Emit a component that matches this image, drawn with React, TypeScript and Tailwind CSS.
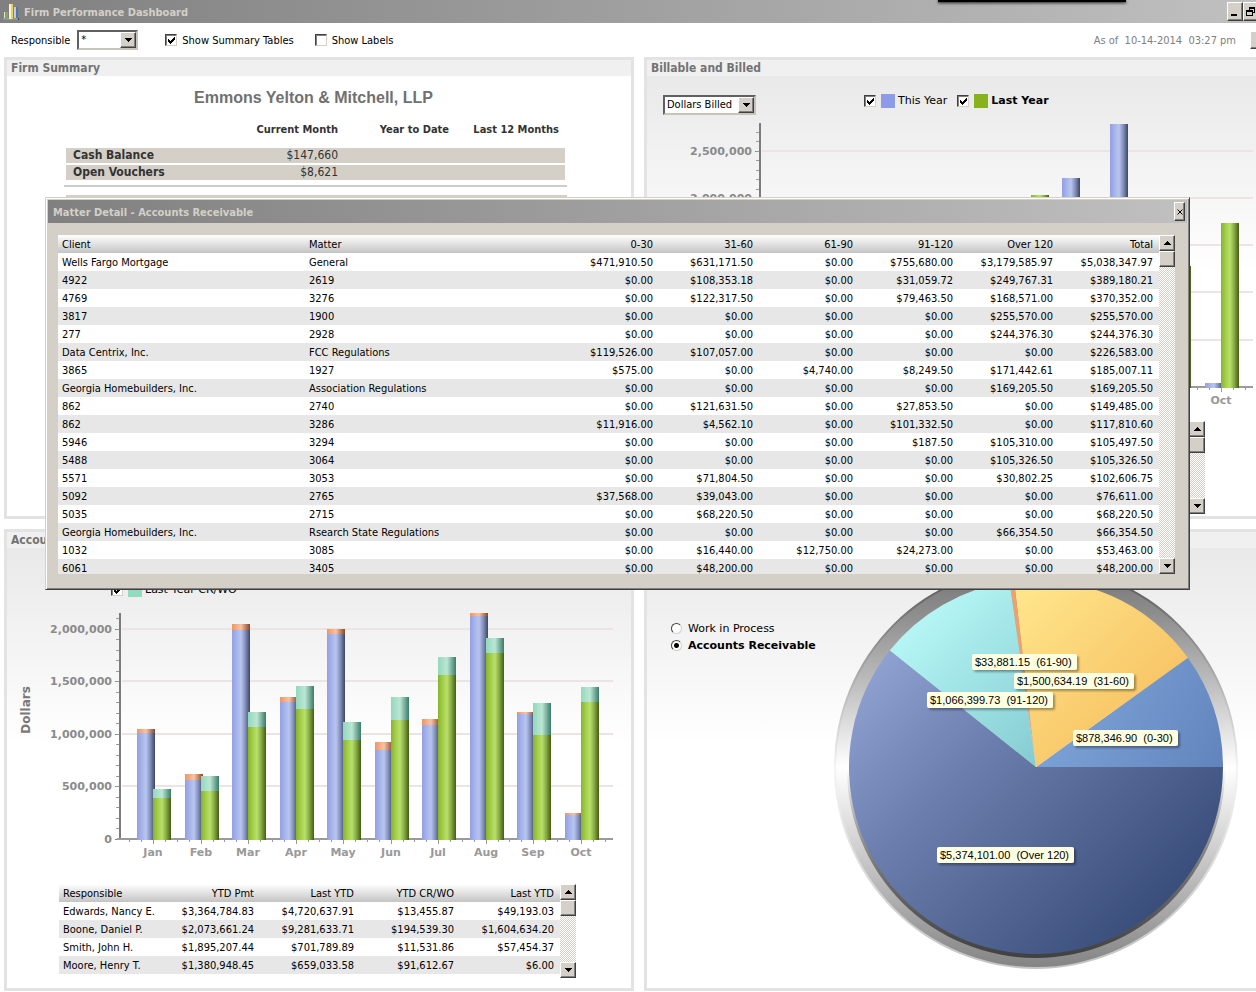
import { useState, type ReactNode } from "react";

const MONTH_X = [146, 194, 241, 289, 336, 384, 431, 479, 526, 574];
const AXIS_X = 112;

// thousands of dollars, the *Top values include credits and write-offs
interface MonthBar {
  slot: number;
  month?: string;
  current?: number;
  currentTop?: number;
  last?: number;
  lastTop?: number;
}

const RECEIPTS: MonthBar[] = [
  { slot: 0, month: "Jan", current: 1010, currentTop: 1048, last: 390, lastTop: 476 },
  { slot: 1, month: "Feb", current: 562, currentTop: 619, last: 457, lastTop: 600 },
  { slot: 2, month: "Mar", current: 1990, currentTop: 2048, last: 1067, lastTop: 1210 },
  { slot: 3, month: "Apr", current: 1305, currentTop: 1352, last: 1238, lastTop: 1457 },
  { slot: 4, month: "May", current: 1952, currentTop: 2000, last: 943, lastTop: 1114 },
  { slot: 5, month: "Jun", current: 848, currentTop: 924, last: 1133, lastTop: 1352 },
  { slot: 6, month: "Jul", current: 1086, currentTop: 1143, last: 1562, lastTop: 1733 },
  { slot: 7, month: "Aug", current: 2124, currentTop: 2152, last: 1771, lastTop: 1914 },
  { slot: 8, month: "Sep", current: 1190, currentTop: 1210, last: 990, lastTop: 1295 },
  { slot: 9, month: "Oct", current: 229, currentTop: 248, last: 1305, lastTop: 1448 },
];

const BILLED: MonthBar[] = [
  { slot: 5, last: 2032 },
  { slot: 6, current: 2212 },
  { slot: 7, current: 2783 },
  { slot: 8, last: 1280 },
  { slot: 9, month: "Oct", current: 42, last: 1735 },
];

const MATTER_COLUMNS = ["Client", "Matter", "0-30", "31-60", "61-90", "91-120", "Over 120", "Total"];

const MATTERS = [
  ["Wells Fargo Mortgage", "General", "$471,910.50", "$631,171.50", "$0.00", "$755,680.00", "$3,179,585.97", "$5,038,347.97"],
  ["4922", "2619", "$0.00", "$108,353.18", "$0.00", "$31,059.72", "$249,767.31", "$389,180.21"],
  ["4769", "3276", "$0.00", "$122,317.50", "$0.00", "$79,463.50", "$168,571.00", "$370,352.00"],
  ["3817", "1900", "$0.00", "$0.00", "$0.00", "$0.00", "$255,570.00", "$255,570.00"],
  ["277", "2928", "$0.00", "$0.00", "$0.00", "$0.00", "$244,376.30", "$244,376.30"],
  ["Data Centrix, Inc.", "FCC Regulations", "$119,526.00", "$107,057.00", "$0.00", "$0.00", "$0.00", "$226,583.00"],
  ["3865", "1927", "$575.00", "$0.00", "$4,740.00", "$8,249.50", "$171,442.61", "$185,007.11"],
  ["Georgia Homebuilders, Inc.", "Association Regulations", "$0.00", "$0.00", "$0.00", "$0.00", "$169,205.50", "$169,205.50"],
  ["862", "2740", "$0.00", "$121,631.50", "$0.00", "$27,853.50", "$0.00", "$149,485.00"],
  ["862", "3286", "$11,916.00", "$4,562.10", "$0.00", "$101,332.50", "$0.00", "$117,810.60"],
  ["5946", "3294", "$0.00", "$0.00", "$0.00", "$187.50", "$105,310.00", "$105,497.50"],
  ["5488", "3064", "$0.00", "$0.00", "$0.00", "$0.00", "$105,326.50", "$105,326.50"],
  ["5571", "3053", "$0.00", "$71,804.50", "$0.00", "$0.00", "$30,802.25", "$102,606.75"],
  ["5092", "2765", "$37,568.00", "$39,043.00", "$0.00", "$0.00", "$0.00", "$76,611.00"],
  ["5035", "2715", "$0.00", "$68,220.50", "$0.00", "$0.00", "$0.00", "$68,220.50"],
  ["Georgia Homebuilders, Inc.", "Rsearch State Regulations", "$0.00", "$0.00", "$0.00", "$0.00", "$66,354.50", "$66,354.50"],
  ["1032", "3085", "$0.00", "$16,440.00", "$12,750.00", "$24,273.00", "$0.00", "$53,463.00"],
  ["6061", "3405", "$0.00", "$48,200.00", "$0.00", "$0.00", "$0.00", "$48,200.00"],
];

const PAYMENT_COLUMNS = ["Responsible", "YTD Pmt", "Last YTD", "YTD CR/WO", "Last YTD"];

const PAYMENTS = [
  ["Edwards, Nancy E.", "$3,364,784.83", "$4,720,637.91", "$13,455.87", "$49,193.03"],
  ["Boone, Daniel P.", "$2,073,661.24", "$9,281,633.71", "$194,539.30", "$1,604,634.20"],
  ["Smith, John H.", "$1,895,207.44", "$701,789.89", "$11,531.86", "$57,454.37"],
  ["Moore, Henry T.", "$1,380,948.45", "$659,033.58", "$91,612.67", "$6.00"],
];

const SLICES = [
  { name: "0-30", amount: 878346.9, fill: "url(#slice-0)" },
  { name: "31-60", amount: 1500634.19, fill: "url(#slice-31)" },
  { name: "61-90", amount: 33881.15, fill: "#f0a06c" },
  { name: "91-120", amount: 1066399.73, fill: "url(#slice-91)" },
  { name: "Over 120", amount: 5374101, fill: "url(#slice-120)" },
];

const SLICE_LABELS = [
  { text: "$33,881.15  (61-90)", x: 140, y: 91, w: 105 },
  { text: "$1,500,634.19  (31-60)", x: 182, y: 110, w: 120 },
  { text: "$1,066,399.73  (91-120)", x: 95, y: 129, w: 126 },
  { text: "$878,346.90  (0-30)", x: 241, y: 167, w: 105 },
  { text: "$5,374,101.00  (Over 120)", x: 105, y: 284, w: 137 },
];

const RAISED =
  "border border-t-white border-l-white border-r-[#404040] border-b-[#404040] bg-[#d4d0c8] shadow-[inset_-1px_-1px_0_#808080]";

function ArrowButton({ direction }: { direction: "up" | "down" }) {
  return (
    <button aria-label={`Scroll ${direction}`} className={`flex h-4 w-4 shrink-0 items-center justify-center ${RAISED}`}>
      <svg width="7" height="4" viewBox="0 0 7 4" shapeRendering="crispEdges">
        <path d={direction === "up" ? "M3 0h1v1h1v1h1v1h1v1H0V3h1V2h1V1h1z" : "M0 0h7v1H6v1H5v1H4v1H3V3H2V2H1V1H0z"} />
      </svg>
    </button>
  );
}

function ScrollBar() {
  return (
    <div className="flex w-4 shrink-0 flex-col bg-[repeating-conic-gradient(#d4d0c8_0_25%,#ffffff_0_50%)] bg-[length:2px_2px]">
      <ArrowButton direction="up" />
      <div className={`h-4 w-4 ${RAISED}`} />
      <div className="flex-1" />
      <ArrowButton direction="down" />
    </div>
  );
}

function Dropdown({ id, label, options, className }: {
  id?: string;
  label: string;
  options: string[];
  className: string;
}) {
  return (
    <div className="relative">
      <select
        id={id}
        aria-label={label}
        className={`block h-5 appearance-none border-2 border-t-[#606060] border-r-[#c8c4bc] border-b-[#c8c4bc] border-l-[#606060] bg-white pl-0.5 text-[11px] leading-4 text-black outline-none ${className}`}
      >
        {options.map((o) => (
          <option key={o}>{o}</option>
        ))}
      </select>
      <span className={`pointer-events-none absolute top-0.5 right-0.5 flex h-4 w-4 items-center justify-center ${RAISED}`}>
        <svg width="7" height="4" viewBox="0 0 7 4" shapeRendering="crispEdges">
          <path d="M0 0h7v1H6v1H5v1H4v1H3V3H2V2H1V1H0z" />
        </svg>
      </span>
    </div>
  );
}

function CheckBox({ initial, children, className = "" }: { initial: boolean; children: ReactNode; className?: string }) {
  const [checked, setChecked] = useState(initial);
  return (
    <label className={`flex items-center ${className}`}>
      <span className="grid">
        <input
          type="checkbox"
          checked={checked}
          onChange={(e) => setChecked(e.target.checked)}
          className="col-start-1 row-start-1 h-3 w-3 appearance-none border border-t-[#404040] border-r-[#d4d0c8] border-b-[#d4d0c8] border-l-[#404040] bg-white shadow-[inset_1px_1px_0_#808080]"
        />
        {checked && (
          <svg
            width="12"
            height="12"
            viewBox="0 0 12 12"
            shapeRendering="crispEdges"
            className="pointer-events-none col-start-1 row-start-1"
          >
            <path d="M3 5h1v1h1v1h1V6h1V5h1V4h1V3h1v3H9v1H8v1H7v1H6v1H5V9H4V8H3z" />
          </svg>
        )}
      </span>
      {children}
    </label>
  );
}

function Panel({ title, shaded = false, children }: { title?: string; shaded?: boolean; children: ReactNode }) {
  return (
    <section className="flex min-w-0 flex-col border-3 border-[#e3e3e3] bg-white">
      <div className="h-4 bg-[#f0f0f0] px-1">
        {title && <h2 className="text-xs leading-4 font-bold text-[#737373]">{title}</h2>}
      </div>
      <div className={`flex-1 ${shaded ? "bg-linear-to-b from-[#e9e9e9] via-white via-45% to-white" : ""}`}>
        {children}
      </div>
    </section>
  );
}

function DataTable({ columns, rows, textColumns, widths }: {
  columns: string[];
  rows: string[][];
  textColumns: number;
  widths: string[];
}) {
  return (
    <table className="w-full table-fixed border-collapse text-[11px] leading-4 text-black">
      <colgroup>
        {widths.map((w, i) => (
          <col key={i} className={w} />
        ))}
      </colgroup>
      <thead>
        <tr className="bg-linear-to-b from-white via-[#e2e2e2] to-[#c4c4c4]">
          {columns.map((c, i) => (
            <th key={i} scope="col" className={`pt-0.5 pr-1.5 pb-0 pl-1 font-normal ${i < textColumns ? "text-left" : "text-right"}`}>
              {c}
            </th>
          ))}
        </tr>
      </thead>
      <tbody>
        {rows.map((row, r) => (
          <tr key={r} className="bg-white even:bg-[#e7e7e7]">
            {row.map((cell, i) => (
              <td key={i} className={`pt-0.5 pr-1.5 pb-0 pl-1 whitespace-nowrap ${i < textColumns ? "text-left" : "text-right"}`}>
                {cell}
              </td>
            ))}
          </tr>
        ))}
      </tbody>
    </table>
  );
}

function BarChart({ id, data, height, base, top, scale, ticks, labelFrom = 0, title }: {
  id: string;
  data: MonthBar[];
  height: number;
  base: number;
  top: number;
  scale: number; // pixels per million
  ticks: number[];
  labelFrom?: number;
  title?: string;
}) {
  const y = (thousands: number) => base - Math.round((thousands * scale) / 1000);
  const minor = Math.floor((base - top) / (scale / 10));

  return (
    <svg
      width="616"
      height={height}
      viewBox={`0 0 616 ${height}`}
      className="block font-['DejaVu_Sans',sans-serif] text-[11px] font-bold"
    >
      <defs>
        <linearGradient id={`${id}-blue`}>
          <stop offset="0" stopColor="#939fe0" />
          <stop offset="0.25" stopColor="#a5b3ec" />
          <stop offset="0.5" stopColor="#b9c5ee" />
          <stop offset="0.75" stopColor="#7e8cb8" />
          <stop offset="1" stopColor="#3d4560" />
        </linearGradient>
        <linearGradient id={`${id}-green`}>
          <stop offset="0" stopColor="#8ab32c" />
          <stop offset="0.25" stopColor="#a2cd48" />
          <stop offset="0.5" stopColor="#b9e06c" />
          <stop offset="0.75" stopColor="#83a740" />
          <stop offset="1" stopColor="#435c14" />
        </linearGradient>
        <linearGradient id={`${id}-orange`}>
          <stop offset="0" stopColor="#f19462" />
          <stop offset="0.5" stopColor="#f9c2a4" />
          <stop offset="1" stopColor="#8a4524" />
        </linearGradient>
        <linearGradient id={`${id}-teal`}>
          <stop offset="0" stopColor="#92d8bc" />
          <stop offset="0.5" stopColor="#bce6d4" />
          <stop offset="1" stopColor="#3a7c68" />
        </linearGradient>
      </defs>

      {ticks.map((tick) => {
        const ly = y(tick);
        return (
          <g key={tick}>
            {tick > 0 && <rect x={AXIS_X + 3} y={ly - 1} width={603 - AXIS_X} height="2" fill="#ebe4e1" />}
            <rect x={AXIS_X - 4} y={ly} width="4" height="1" fill="#808080" />
            {tick >= labelFrom && (
              <text x="105" y={ly + 4} textAnchor="end" fill="#8a8a8a">
                {(tick * 1000).toLocaleString("en-US")}
              </text>
            )}
          </g>
        );
      })}
      {Array.from({ length: minor }, (_, i) => (
        <rect key={i} x={AXIS_X - 3} y={y((i + 1) * 100)} width="3" height="1" fill="#9a9a9a" />
      ))}

      <rect x={AXIS_X} y={top} width="2" height={base - top + 1} fill="#7c7c7c" />
      <rect x={AXIS_X - 2} y={base - 1} width={608 - AXIS_X} height="2" fill="#9a9a9a" />
      {MONTH_X.map((x, i) => (
        <g key={x} fill="#9a9a9a">
          <rect x={x - 24} y={base} width="1" height="3" />
          <rect x={x - 12} y={base} width="1" height="3" />
          <rect x={x} y={base} width="1" height="5" />
          <rect x={x + 12} y={base} width="1" height="3" />
          {i === MONTH_X.length - 1 && <rect x={x + 24} y={base} width="1" height="3" />}
        </g>
      ))}

      {data.map(({ slot, month, current = 0, currentTop = current, last = 0, lastTop = last }) => {
        const x = MONTH_X[slot];
        return (
          <g key={slot}>
            {current > 0 && (
              <>
                <rect x={x - 16} y={y(currentTop)} width="18" height={y(current) - y(currentTop)} fill={`url(#${id}-orange)`} />
                <rect x={x - 16} y={y(current)} width="18" height={base + 1 - y(current)} fill={`url(#${id}-blue)`} />
              </>
            )}
            {last > 0 && (
              <>
                <rect x={x} y={y(lastTop)} width="18" height={y(last) - y(lastTop)} fill={`url(#${id}-teal)`} />
                <rect x={x} y={y(last)} width="18" height={base + 1 - y(last)} fill={`url(#${id}-green)`} />
              </>
            )}
            {month && (
              <text x={x} y={base + 17} textAnchor="middle" fill="#999999">
                {month}
              </text>
            )}
          </g>
        );
      })}

      {title && (
        <text transform="translate(23 105) rotate(-90)" textAnchor="middle" className="text-xs" fill="#787878">
          {title}
        </text>
      )}
    </svg>
  );
}

function AgingPie() {
  const cx = 204;
  const cy = 204;
  const r = 187;
  const total = SLICES.reduce((sum, s) => sum + s.amount, 0);
  let angle = 0;
  const paths = SLICES.map((s) => {
    const start = angle;
    angle += (s.amount / total) * Math.PI * 2;
    const large = angle - start > Math.PI ? 1 : 0;
    const point = (a: number) => `${cx + r * Math.cos(a)} ${cy - r * Math.sin(a)}`;
    return { ...s, d: `M${cx} ${cy}L${point(start)}A${r} ${r} 0 ${large} 0 ${point(angle)}Z` };
  });

  return (
    <svg
      width="408"
      height="408"
      viewBox="0 0 408 408"
      className="block shrink-0 font-['Liberation_Sans',Arial,sans-serif] text-[11px]"
    >
      <defs>
        <linearGradient id="ring" x1="0" y1="0" x2="0" y2="1">
          <stop offset="0" stopColor="#747474" />
          <stop offset="0.12" stopColor="#8e8e8e" />
          <stop offset="0.3" stopColor="#c0c0c0" />
          <stop offset="0.5" stopColor="#ffffff" />
          <stop offset="0.7" stopColor="#d0d0d0" />
          <stop offset="1" stopColor="#848484" />
        </linearGradient>
        <linearGradient id="ring-edge" x1="0" y1="0" x2="0" y2="1">
          <stop offset="0" stopColor="#4c4c4c" />
          <stop offset="0.3" stopColor="#b4b4b4" />
          <stop offset="0.5" stopColor="#f4f4f4" />
          <stop offset="1" stopColor="#c4c4c4" />
        </linearGradient>
        <linearGradient id="ring-shade" x1="0" y1="0" x2="0" y2="1">
          <stop offset="0.5" stopColor="#505050" stopOpacity="0" />
          <stop offset="0.85" stopColor="#606060" />
          <stop offset="1" stopColor="#404040" />
        </linearGradient>
        <linearGradient id="slice-0" gradientUnits="userSpaceOnUse" x1="210" y1="110" x2="390" y2="204">
          <stop offset="0" stopColor="#80a8dc" />
          <stop offset="1" stopColor="#6284bc" />
        </linearGradient>
        <linearGradient id="slice-31" gradientUnits="userSpaceOnUse" x1="190" y1="20" x2="320" y2="150">
          <stop offset="0" stopColor="#ffe68c" />
          <stop offset="1" stopColor="#f7c364" />
        </linearGradient>
        <linearGradient id="slice-91" gradientUnits="userSpaceOnUse" x1="90" y1="60" x2="230" y2="200">
          <stop offset="0" stopColor="#b4f4f4" />
          <stop offset="1" stopColor="#80c8ce" />
        </linearGradient>
        <linearGradient id="slice-120" gradientUnits="userSpaceOnUse" x1="60" y1="80" x2="330" y2="350">
          <stop offset="0" stopColor="#90a2d2" />
          <stop offset="0.35" stopColor="#6c7fae" />
          <stop offset="1" stopColor="#394d7a" />
        </linearGradient>
        <filter id="label-shadow" x="-10%" y="-20%" width="130%" height="160%">
          <feDropShadow dx="2" dy="2" stdDeviation="1" floodOpacity="0.35" />
        </filter>
      </defs>
      <circle cx={cx} cy={cy} r="202" fill="url(#ring-edge)" />
      <circle cx={cx} cy={cy} r="200" fill="url(#ring)" />
      <circle cx={cx} cy={cy + 2} r="189" fill="url(#ring-shade)" />
      {paths.map((p) => (
        <path key={p.name} d={p.d} fill={p.fill} />
      ))}
      {SLICE_LABELS.map((l) => (
        <g key={l.text}>
          <rect x={l.x} y={l.y} width={l.w} height="16" rx="2" fill="#ffffe1" filter="url(#label-shadow)" />
          <text x={l.x + 3} y={l.y + 12} className="whitespace-pre" fill="#000000">
            {l.text}
          </text>
        </g>
      ))}
    </svg>
  );
}

function MatterDialog() {
  return (
    <div
      role="dialog"
      aria-label="Matter Detail"
      className="absolute top-[197px] right-[66px] left-[45px] border border-t-[#d4d0c8] border-r-[#404040] border-b-[#404040] border-l-[#d4d0c8] bg-[#d4d0c8] p-0.5 shadow-[inset_1px_1px_0_#ffffff,inset_-1px_-1px_0_#808080]"
    >
      <div className="flex h-[23px] items-center justify-between bg-linear-to-r from-[#808080] to-[#c0c0c0] pr-0.5 pl-[5px]">
        <h2 className="pt-0.5 text-[11px] font-bold text-[#d4d0c8]">Matter Detail - Accounts Receivable</h2>
        <button aria-label="Close" className={`flex h-[19px] w-[11px] items-center justify-center ${RAISED}`}>
          <svg width="6" height="6" viewBox="0 0 6 6">
            <path d="M0.5 0.5l5 5M5.5 0.5l-5 5" stroke="#000" />
          </svg>
        </button>
      </div>
      <div className="mx-2.5 mt-3 mb-[13px] flex h-[339px]">
        <div className="min-w-0 flex-1 overflow-hidden">
          <DataTable
            columns={MATTER_COLUMNS}
            rows={MATTERS}
            textColumns={2}
            widths={["w-[247px]", "", "w-[100px]", "w-[100px]", "w-[100px]", "w-[100px]", "w-[100px]", "w-[100px]"]}
          />
        </div>
        <div className="mr-0.5 flex">
          <ScrollBar />
        </div>
      </div>
    </div>
  );
}

function FirmSummary() {
  return (
    <div className="pt-3 pr-16 pl-[57px]">
      <h1 className="pr-1 text-center font-['Liberation_Sans',Arial,sans-serif] text-base leading-5 font-bold text-[#707070]">
        Emmons Yelton &amp; Mitchell, LLP
      </h1>
      <table className="mt-3 w-full table-fixed border-separate border-spacing-x-0 border-spacing-y-0.5 px-0.5 text-[#333333]">
        <thead className="text-[11px] leading-4">
          <tr>
            <td className="w-[162px] p-0 pb-2"></td>
            <th scope="col" className="w-[110px] p-0 pb-2 text-right">Current Month</th>
            <th scope="col" className="w-[111px] p-0 pb-2 text-right">Year to Date</th>
            <th scope="col" className="p-0 pr-1.5 pb-2 text-right">Last 12 Months</th>
          </tr>
        </thead>
        <tbody className="text-xs leading-[15px]">
          <tr className="bg-[#d4d0c8]">
            <th scope="row" className="p-0 pl-[7px] text-left">Cash Balance</th>
            <td className="p-0 text-right">$147,660</td>
            <td className="p-0"></td>
            <td className="p-0"></td>
          </tr>
          <tr className="bg-[#d4d0c8]">
            <th scope="row" className="p-0 pl-[7px] text-left">Open Vouchers</th>
            <td className="p-0 text-right">$8,621</td>
            <td className="p-0"></td>
            <td className="p-0"></td>
          </tr>
        </tbody>
      </table>
      <div className="mt-[3px] h-0.5 bg-[#cccccc]" />
      <div className="mt-2 ml-0.5 h-0.5 bg-[#d4d0c8]" />
    </div>
  );
}

function TitleBar() {
  return (
    <header className="relative flex h-[23px] items-center bg-linear-to-r from-[#808080] to-[#c0c0c0] pl-0.5">
      <svg width="18" height="18" viewBox="0 0 18 18">
        <path d="M1 15h16v2H1z" fill="#39463a" />
        <path d="M1 16h15" stroke="#e4e8dc" />
        <rect x="2" y="9" width="4" height="6" fill="#7fa56c" />
        <rect x="2" y="9" width="1" height="6" fill="#d6e4c8" />
        <rect x="7" y="1" width="4" height="15" fill="#ecd05c" />
        <rect x="7" y="1" width="2" height="15" fill="#fff4c0" />
        <rect x="12" y="4" width="4" height="11" fill="#5474ac" />
        <rect x="12" y="4" width="2" height="11" fill="#bccde8" />
      </svg>
      <span className="ml-1 pt-0.5 text-[11px] font-bold text-[#d4d0c8]">Firm Performance Dashboard</span>
      <div className="absolute top-0 right-[130px] h-0.5 w-[188px] bg-black shadow-[0_1px_3px_#000000]" />
      <div className="-mr-[3px] ml-auto flex">
        <button aria-label="Minimize" className={`flex h-[19px] w-4 items-end pb-1 pl-[3px] ${RAISED}`}>
          <span className="h-0.5 w-1.5 bg-black" />
        </button>
        <button aria-label="Restore" className={`flex h-[19px] w-4 items-center justify-center ${RAISED}`}>
          <svg width="10" height="10" viewBox="0 0 10 10" shapeRendering="crispEdges" className="shrink-0">
            <path d="M3 0h6v6H7V5h1V2H4v1H3zM0 3h7v6H0zM1 5v3h5V5z" fillRule="evenodd" />
          </svg>
        </button>
      </div>
    </header>
  );
}

export default function App() {
  const [aging, setAging] = useState("ar");

  return (
    <div className="relative flex min-h-screen flex-col overflow-hidden bg-white pb-px font-['DejaVu_Sans_Condensed','Noto_Sans',Tahoma,sans-serif] text-[11px] leading-4">
      <TitleBar />

      <div className="flex h-[34px] items-center pl-[11px] text-black">
        <label className="mr-[7px] pt-0.5" htmlFor="responsible">Responsible</label>
        <Dropdown id="responsible" label="Responsible" options={["*"]} className="w-[61px]" />
        <CheckBox initial className="ml-[27px]">
          <span className="ml-[5px] pt-px">Show Summary Tables</span>
        </CheckBox>
        <CheckBox initial={false} className="ml-[21px]">
          <span className="ml-[5px] pt-px">Show Labels</span>
        </CheckBox>
        <span className="mr-3.5 ml-auto pt-px whitespace-pre text-[#808080]">As of  10-14-2014  03:27 pm</span>
        <button aria-label="Refresh" className={`-mr-3 h-[18px] w-[18px] ${RAISED}`} />
      </div>

      <div className="-mr-[18px] ml-1 grid flex-1 grid-cols-2 grid-rows-2 gap-2.5">
        <Panel title="Firm Summary">
          <FirmSummary />
        </Panel>

        <Panel title="Billable and Billed" shaded>
          <div className="flex h-10 items-start pt-[17px] pl-4">
            <div className="pt-0.5">
              <Dropdown label="Amount" options={["Dollars Billed"]} className="w-[93px]" />
            </div>
            <div className="ml-[108px] flex h-4 items-center gap-2.5 text-black font-['DejaVu_Sans',sans-serif]">
              <CheckBox initial>
                <span className="mr-[3px] ml-[5px] h-3.5 w-3.5 bg-[#8c9ce6]" />
                <span>This Year</span>
              </CheckBox>
              <CheckBox initial>
                <span className="mr-[3px] ml-[5px] h-3.5 w-3.5 bg-[#86b31c]" />
                <span className="font-bold">Last Year</span>
              </CheckBox>
            </div>
          </div>
          <BarChart
            id="billed"
            data={BILLED}
            height={294}
            base={271}
            top={7}
            scale={94.5}
            ticks={[0, 500, 1000, 1500, 2000, 2500]}
            labelFrom={2000}
          />
          <div className="mt-[11px] ml-[542px] flex h-[93px]">
            <ScrollBar />
          </div>
        </Panel>

        <Panel title="Accounts Receivable" shaded>
          <div className="flex h-[57px] items-end pb-[7px] pl-[104px] text-black font-['DejaVu_Sans',sans-serif]">
            <CheckBox initial>
              <span className="mr-[3px] ml-[5px] h-3.5 w-3.5 bg-[#92dcbe]" />
              <span>Last Year CR/WO</span>
            </CheckBox>
          </div>
          <BarChart
            id="receipts"
            data={RECEIPTS}
            height={260}
            base={234}
            top={8}
            scale={105}
            ticks={[0, 500, 1000, 1500, 2000]}
            title="Dollars"
          />
          <div className="mt-[19px] mr-[55px] ml-[52px] flex">
            <div className="min-w-0 flex-1">
              <DataTable
                columns={PAYMENT_COLUMNS}
                rows={PAYMENTS}
                textColumns={1}
                widths={["", "w-[100px]", "w-[100px]", "w-[100px]", "w-[100px]"]}
              />
            </div>
            <div className="-mb-1 flex">
              <ScrollBar />
            </div>
          </div>
        </Panel>

        <Panel shaded>
          <div className="flex pt-[15px] pl-6">
            <div className="w-[161px] shrink-0 pt-[57px] font-['DejaVu_Sans',sans-serif] text-black">
              {[
                ["wip", "Work in Process"],
                ["ar", "Accounts Receivable"],
              ].map(([value, label]) => (
                <label key={value} className={`flex h-[17px] items-center whitespace-nowrap ${aging === value ? "font-bold" : ""}`}>
                  <input
                    type="radio"
                    name="aging"
                    checked={aging === value}
                    onChange={() => setAging(value)}
                    className="mr-1.5 h-[11px] w-[11px] appearance-none rounded-full border border-t-[#404040] border-r-[#d4d0c8] border-b-[#d4d0c8] border-l-[#404040] bg-white checked:bg-[radial-gradient(circle,#000000_0_2px,#ffffff_3px)]"
                  />
                  {label}
                </label>
              ))}
            </div>
            <AgingPie />
          </div>
        </Panel>
      </div>

      <MatterDialog />
    </div>
  );
}
